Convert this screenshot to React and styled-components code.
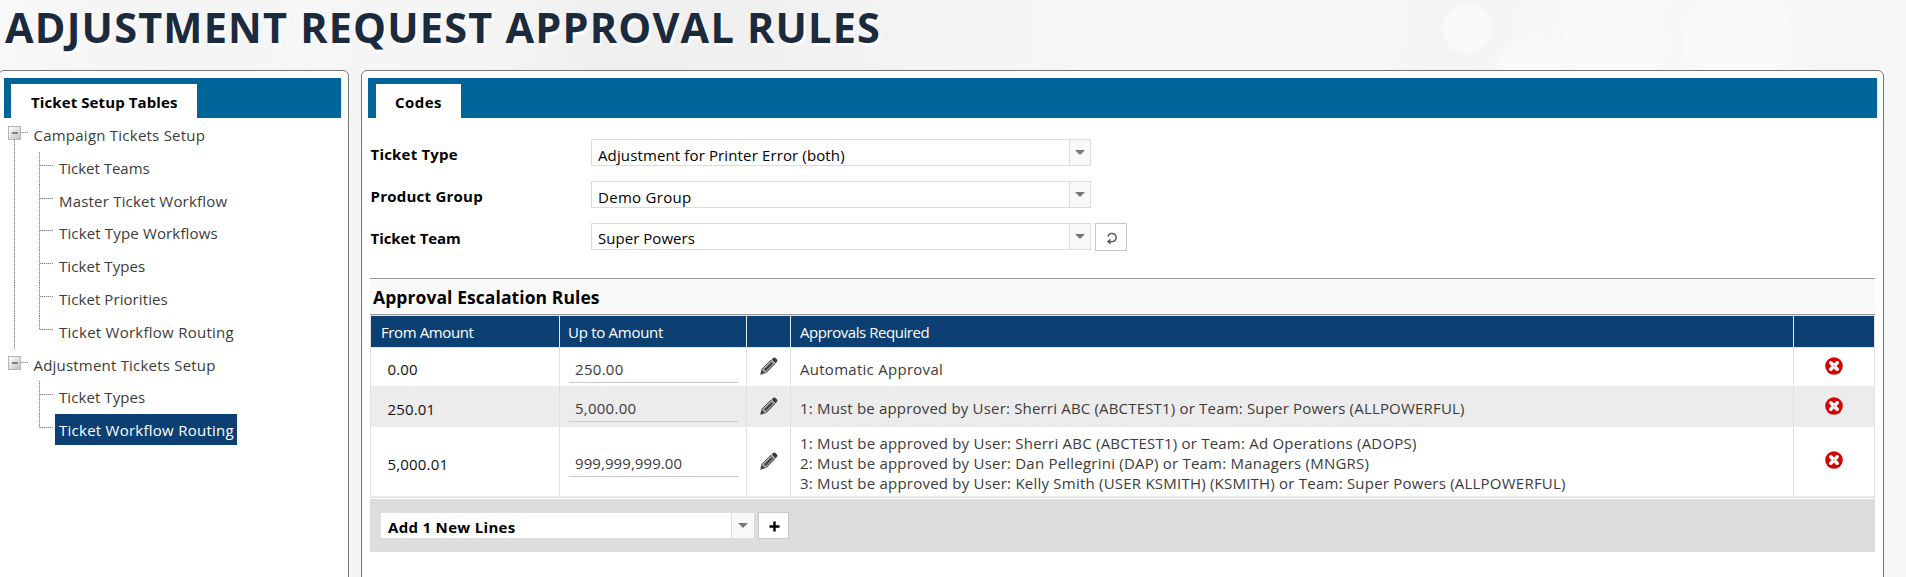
import React from 'react';
import styled, { createGlobalStyle, css } from 'styled-components';

const GlobalStyle = createGlobalStyle`
  *, *::before, *::after { box-sizing: border-box; }
  body {
    margin: 0;
    font: 15px/20px "Open Sans", "Noto Sans", sans-serif;
    color: #3b3b3b;
    overflow: hidden;
  }
`;

const Page = styled.div`
  height: 577px;
  display: flex;
  flex-direction: column;
  overflow: hidden;
  background:
    radial-gradient(circle at 1467px 29px, #fafaf9 22px, transparent 27px),
    radial-gradient(circle at 1614px 46px, #f9f9f9 46px, transparent 54px),
    radial-gradient(circle at 1740px 40px, #f9f9f9 46px, transparent 60px),
    radial-gradient(circle at 1530px 70px, #f9f9f9 30px, transparent 38px),
    linear-gradient(97deg, #f8f8f8 0, #f4f4f4 160px, #f6f6f6 300px, #f5f5f5 480px, #efefef 600px, #f0f0f0 760px,
      #f7f7f7 1090px, #f7f7f7 1380px, #f3f3f3 1440px, #f8f8f8 1560px, #f6f6f6 1906px);
`;

const Text = styled.span`
  letter-spacing: ${(p) => p.$ls || 0}px;
  white-space: nowrap;
`;

const Title = styled.h1`
  margin: 0;
  padding-left: 5px;
  height: 70px;
  flex: none;
  font-size: 41.5px;
  line-height: 54px;
  font-weight: 700;
  letter-spacing: 1.17px;
  color: #1b2a3c;
  text-shadow: 2px 3px 1px #fff;
  white-space: nowrap;
`;

const Columns = styled.div`
  display: flex;
  gap: 12px;
  margin-left: -2px;
  flex: 1;
`;

const Panel = styled.section`
  width: ${(p) => p.$width}px;
  height: 540px;
  flex: none;
  padding: 7px ${(p) => p.$padRight}px 0 ${(p) => p.$padLeft}px;
  border: 1px solid #777;
  border-radius: 6px;
  background: #fff;
`;

const TabBar = styled.div`
  height: 40px;
  padding: 6px 0 0 ${(p) => p.$inset}px;
  background: #006699;
`;

const Tab = styled.div`
  width: ${(p) => p.$width}px;
  height: 34px;
  padding-left: ${(p) => p.$pad}px;
  line-height: 37px;
  font-weight: 700;
  color: #000;
  background: #fff;
`;

const Tree = styled.div`
  padding-top: 1px;
`;

const TreeRow = styled.div`
  display: flex;
  height: ${(p) => p.$height}px;
`;

const dotsDown = 'repeating-linear-gradient(to bottom, #858585 0 1px, #dcdcdc 1px 2px)';
const dotsAcross = 'repeating-linear-gradient(to right, #858585 0 1px, #dcdcdc 1px 2px)';

const Expander = styled.span`
  width: 13px;
  height: 14px;
  margin: 7px 0 0 4px;
  display: flex;
  align-items: center;
  justify-content: center;
  border: 1px solid #b5b5b5;
  background: linear-gradient(135deg, #fff, #c0c0c0);
  &::before {
    content: '';
    width: 6px;
    height: 2px;
    background: #808080;
  }
`;

const RootJoint = styled.span`
  width: 17px;
  display: flex;
  flex-direction: column;
`;

const Stem = styled.span`
  width: 1px;
  height: 12px;
  margin-left: 10px;
  background: ${dotsDown};
`;

const Stub = styled.span`
  width: 7px;
  height: 1px;
  margin-top: 13px;
  background: ${dotsAcross};
`;

const RootLabel = styled.span`
  padding: 1px 0 0 5.5px;
  line-height: 31px;
`;

const Trunk = styled.span`
  width: 1px;
  margin: 0 24px 0 10px;
  background: ${(p) => (p.$on ? dotsDown : 'none')};
`;

const Joint = styled.span`
  width: 16px;
  display: flex;
  &::before {
    content: '';
    width: 1px;
    height: ${(p) => (p.$last ? '14px' : '100%')};
    background: ${dotsDown};
  }
  &::after {
    content: '';
    width: 13px;
    height: 1px;
    margin-top: 13px;
    background: ${dotsAcross};
  }
`;

const Leaf = styled.span`
  height: 31px;
  padding: 1px 4px 0;
  line-height: 31px;
  ${(p) => p.$selected && css`
    width: 182px;
    color: #fff;
    background: #0d4072;
  `}
`;

const Form = styled.div`
  padding: 21px 0 0 2px;
  height: 160px;
`;

const Field = styled.div`
  display: flex;
  align-items: flex-start;
  height: 42px;
`;

const Label = styled.label`
  width: 221px;
  padding: 5px 0 0 0.5px;
  font-weight: 700;
  color: #000;
`;

const Select = styled.div`
  width: ${(p) => p.$width}px;
  height: ${(p) => p.$height}px;
  display: flex;
  justify-content: space-between;
  padding-left: ${(p) => (p.$flat ? 7 : 6)}px;
  border: ${(p) => (p.$flat ? '0' : '1px solid #dcdcdc')};
  background: #fff;
  color: #000;
  font-weight: ${(p) => (p.$flat ? 700 : 400)};
  line-height: ${(p) => p.$line}px;
`;

const Arrow = styled.span`
  width: ${(p) => p.$width}px;
  border-left: 1px solid #dcdcdc;
  background: #f8f8f8;
  display: flex;
  justify-content: center;
  &::before {
    content: '';
    width: 0;
    height: 0;
    margin-top: 10px;
    border: 5px solid transparent;
    border-top-color: #777;
    border-bottom: 0;
  }
`;

const IconButton = styled.button`
  width: ${(p) => p.$width}px;
  height: ${(p) => p.$height}px;
  margin: ${(p) => p.$top || 0}px 0 0 4px;
  padding: ${(p) => p.$drop || 0}px 0 0 1px;
  display: flex;
  align-items: center;
  justify-content: center;
  border: 1px solid #c8c8c8;
  background: #fff;
`;

const Section = styled.div`
  margin: 0 2px;
`;

const SectionTitle = styled.h2`
  margin: 0;
  height: 37px;
  padding-left: 3px;
  border: solid #999;
  border-width: 1px 0;
  background: #f9f9f9;
  color: #000;
  font-size: 17.5px;
  font-weight: 700;
  line-height: 37px;
`;

const Table = styled.div`
  border: 1px solid #e0e0e0;
  margin-bottom: 1px;
`;

const grid = css`
  display: grid;
  grid-template-columns: 189px 187px 44px 1003px 80px;
`;

const HeadRow = styled.div`
  ${grid}
  height: 32px;
  background: #0d4072;
  border-bottom: 1px solid #e4e4e4;
  color: #fff;
  line-height: 32px;
`;

const HeadCell = styled.div`
  padding-left: ${(p) => p.$pad || 9}px;
  border-right: ${(p) => (p.$end ? '0' : '1px solid #e8e8e8')};
`;

const Row = styled.div`
  ${grid}
  height: ${(p) => p.$height}px;
  background: ${(p) => (p.$alt ? '#ececec' : '#fff')};
  border-bottom: 1px solid #ededed;
`;

const Cell = styled.div`
  padding: ${(p) => p.$top}px 0 0 ${(p) => p.$pad}px;
  border-right: ${(p) => (p.$end ? '0' : '1px solid #e0e0e0')};
  color: ${(p) => (p.$dark ? '#111' : '#3b3b3b')};
`;

const AmountInput = styled.div`
  width: 169px;
  height: 25px;
  padding: 1px 0 0 6px;
  border-bottom: 1px solid #c8c8c8;
`;

const Line = styled.div`
  height: 20px;
`;

const Footer = styled.div`
  height: 53px;
  padding: 14px 0 0 11px;
  display: flex;
  align-items: flex-start;
  background: #ddd;
`;

const Block = styled.svg`
  display: block;
`;

const Pencil = () => (
  <Block width="18" height="18" viewBox="0 0 18 18">
    <path d="M11.6 2.4 L13.3 .8 Q14.5 0 15.8 1.2 L17 2.5 Q18 3.8 17 4.8 L15.5 6.4Z" fill="#3c3c3c" />
    <path d="M11.2 2.8 L15.1 6.8 L6.3 15.6 L1.8 11.8Z" fill="#8f8f8f" />
    <path d="M1.6 11.8 L.2 17.8 L6.2 16Z" fill="#444" />
    <path d="M10.9 3.1 L2.2 11.8 M14.8 7 L6.2 15.6" stroke="#555" strokeWidth="1" />
    <path d="M12.1 5.9 L5 13" stroke="#3c3c3c" strokeWidth="1.8" />
    <path d="M10.6 4.6 L3.9 11.3" stroke="#c4c4c4" strokeWidth="1" />
    <path d="M2.4 13 L5 15.2" stroke="#ccc" strokeWidth="1" />
  </Block>
);

const Remove = () => (
  <Block width="18" height="18" viewBox="0 0 18 18">
    <circle cx="9" cy="9" r="8.8" fill="#d40505" />
    <path d="M5.8 5.8 L12.2 12.2 M12.2 5.8 L5.8 12.2" stroke="#fff" strokeWidth="3.6" strokeLinecap="round" />
    <circle cx="9" cy="9" r=".9" fill="#e9a0a0" />
  </Block>
);

const Refresh = () => (
  <Block width="12" height="14" viewBox="0 0 12 14">
    <path d="M2 4.6 A4.1 4.1 0 1 1 6.4 9.6 H3" fill="none" stroke="#555" strokeWidth="1.4" />
    <path d="M1 9.6 L4.4 6.6 L4.4 12.8Z" fill="#555" />
  </Block>
);

const Plus = () => (
  <Block width="11" height="11" viewBox="0 0 11 11">
    <path d="M5.5 .5 V10.5 M.5 5.5 H10.5" stroke="#000" strokeWidth="2.4" />
  </Block>
);

const groups = [
  {
    name: ['Campaign Tickets Setup', 0.235],
    trunk: true,
    items: [
      ['Ticket Teams', -0.017, 33],
      ['Master Ticket Workflow', 0.2, 32],
      ['Ticket Type Workflows', 0.154, 33],
      ['Ticket Types', 0.077, 33],
      ['Ticket Priorities', 0.08, 33],
      ['Ticket Workflow Routing', 0.257, 33],
    ],
  },
  {
    name: ['Adjustment Tickets Setup', 0.205],
    items: [['Ticket Types', 0.077, 33], ['Ticket Workflow Routing', 0.257, 33, true]],
  },
];

const fields = [
  { label: ['Ticket Type', 0.2], value: ['Adjustment for Printer Error (both)', 0.13], line: 31 },
  { label: ['Product Group', 0.24], value: ['Demo Group', 0.3], line: 31 },
  { label: ['Ticket Team', -0.06], value: ['Super Powers', 0.04], line: 29, refresh: true },
];

const rules = [
  { from: ['0.00', 0.169], to: ['250.00', 0.3], height: 39, toTop: 10, fromTop: 11, iconTop: 9, removeTop: 9, linesTop: 11,
    lines: [['Automatic Approval', 0.276]] },
  { from: ['250.01', 0.151], to: ['5,000.00', 0.25], height: 40, toTop: 10, fromTop: 12, iconTop: 10, removeTop: 10, linesTop: 11, alt: true,
    lines: [['1: Must be approved by User: Sherri ABC (ABCTEST1) or Team: Super Powers (ALLPOWERFUL)', 0.182]] },
  { from: ['5,000.01', 0.185], to: ['999,999,999.00', 0.079], height: 70, toTop: 25, fromTop: 27, iconTop: 25, removeTop: 24, linesTop: 6,
    lines: [
      ['1: Must be approved by User: Sherri ABC (ABCTEST1) or Team: Ad Operations (ADOPS)', 0.22],
      ['2: Must be approved by User: Dan Pellegrini (DAP) or Team: Managers (MNGRS)', 0.22],
      ['3: Must be approved by User: Kelly Smith (USER KSMITH) (KSMITH) or Team: Super Powers (ALLPOWERFUL)', 0.224],
    ] },
];

const T = ({ v }) => <Text $ls={v[1]}>{v[0]}</Text>;

const SetupTree = () => (
  <Tree>
    {groups.map((g) => (
      <div key={g.name[0]}>
        <TreeRow $height={g.trunk ? 33 : 32}>
          <RootJoint>
            <Expander />
            {g.trunk && <Stem />}
          </RootJoint>
          <Stub />
          <RootLabel><T v={g.name} /></RootLabel>
        </TreeRow>
        {g.items.map((item, i) => (
          <TreeRow key={item[0]} $height={item[2]}>
            <Trunk $on={g.trunk} />
            <Joint $last={i === g.items.length - 1} />
            <Leaf $selected={item[3]}><T v={item} /></Leaf>
          </TreeRow>
        ))}
      </div>
    ))}
  </Tree>
);

const RulesTable = () => (
  <Table>
    <HeadRow>
      <HeadCell $pad={10}><T v={['From Amount', -0.387]} /></HeadCell>
      <HeadCell $pad={8}><T v={['Up to Amount', -0.279]} /></HeadCell>
      <HeadCell />
      <HeadCell><T v={['Approvals Required', -0.444]} /></HeadCell>
      <HeadCell $end />
    </HeadRow>
    {rules.map((r) => (
      <Row key={r.from[0]} $height={r.height} $alt={r.alt}>
        <Cell $top={r.fromTop} $pad={16.5} $dark><T v={r.from} /></Cell>
        <Cell $top={r.toTop} $pad={9}>
          <AmountInput><Line><T v={r.to} /></Line></AmountInput>
        </Cell>
        <Cell $top={r.iconTop} $pad={12.5}><Pencil /></Cell>
        <Cell $top={r.linesTop} $pad={9}>
          {r.lines.map((l) => <Line key={l[0]}><T v={l} /></Line>)}
        </Cell>
        <Cell $top={r.removeTop} $pad={31} $end><Remove /></Cell>
      </Row>
    ))}
  </Table>
);

export default function App() {
  return (
    <>
      <GlobalStyle />
      <Page>
        <Title>ADJUSTMENT REQUEST APPROVAL RULES</Title>
        <Columns>
          <Panel $width={351} $padLeft={5} $padRight={7}>
            <TabBar $inset={7}>
              <Tab $width={186} $pad={20}><T v={['Ticket Setup Tables', 0.1]} /></Tab>
            </TabBar>
            <SetupTree />
          </Panel>
          <Panel $width={1523} $padLeft={6} $padRight={6}>
            <TabBar $inset={8}>
              <Tab $width={85} $pad={19}><T v={['Codes', 0.45]} /></Tab>
            </TabBar>
            <Form>
              {fields.map((f) => (
                <Field key={f.label[0]}>
                  <Label><T v={f.label} /></Label>
                  <Select $width={500} $height={27} $line={f.line}>
                    <T v={f.value} />
                    <Arrow $width={21} />
                  </Select>
                  {f.refresh && <IconButton $width={32} $height={28} $drop={3}><Refresh /></IconButton>}
                </Field>
              ))}
            </Form>
            <Section>
              <SectionTitle><T v={['Approval Escalation Rules', 0.08]} /></SectionTitle>
              <RulesTable />
              <Footer>
                <Select $flat $width={373} $height={25} $line={28}>
                  <T v={['Add 1 New Lines', 0.32]} />
                  <Arrow $width={23} />
                </Select>
                <IconButton $width={31} $height={27} $top={-1} $drop={1}><Plus /></IconButton>
              </Footer>
            </Section>
          </Panel>
        </Columns>
      </Page>
    </>
  );
}
